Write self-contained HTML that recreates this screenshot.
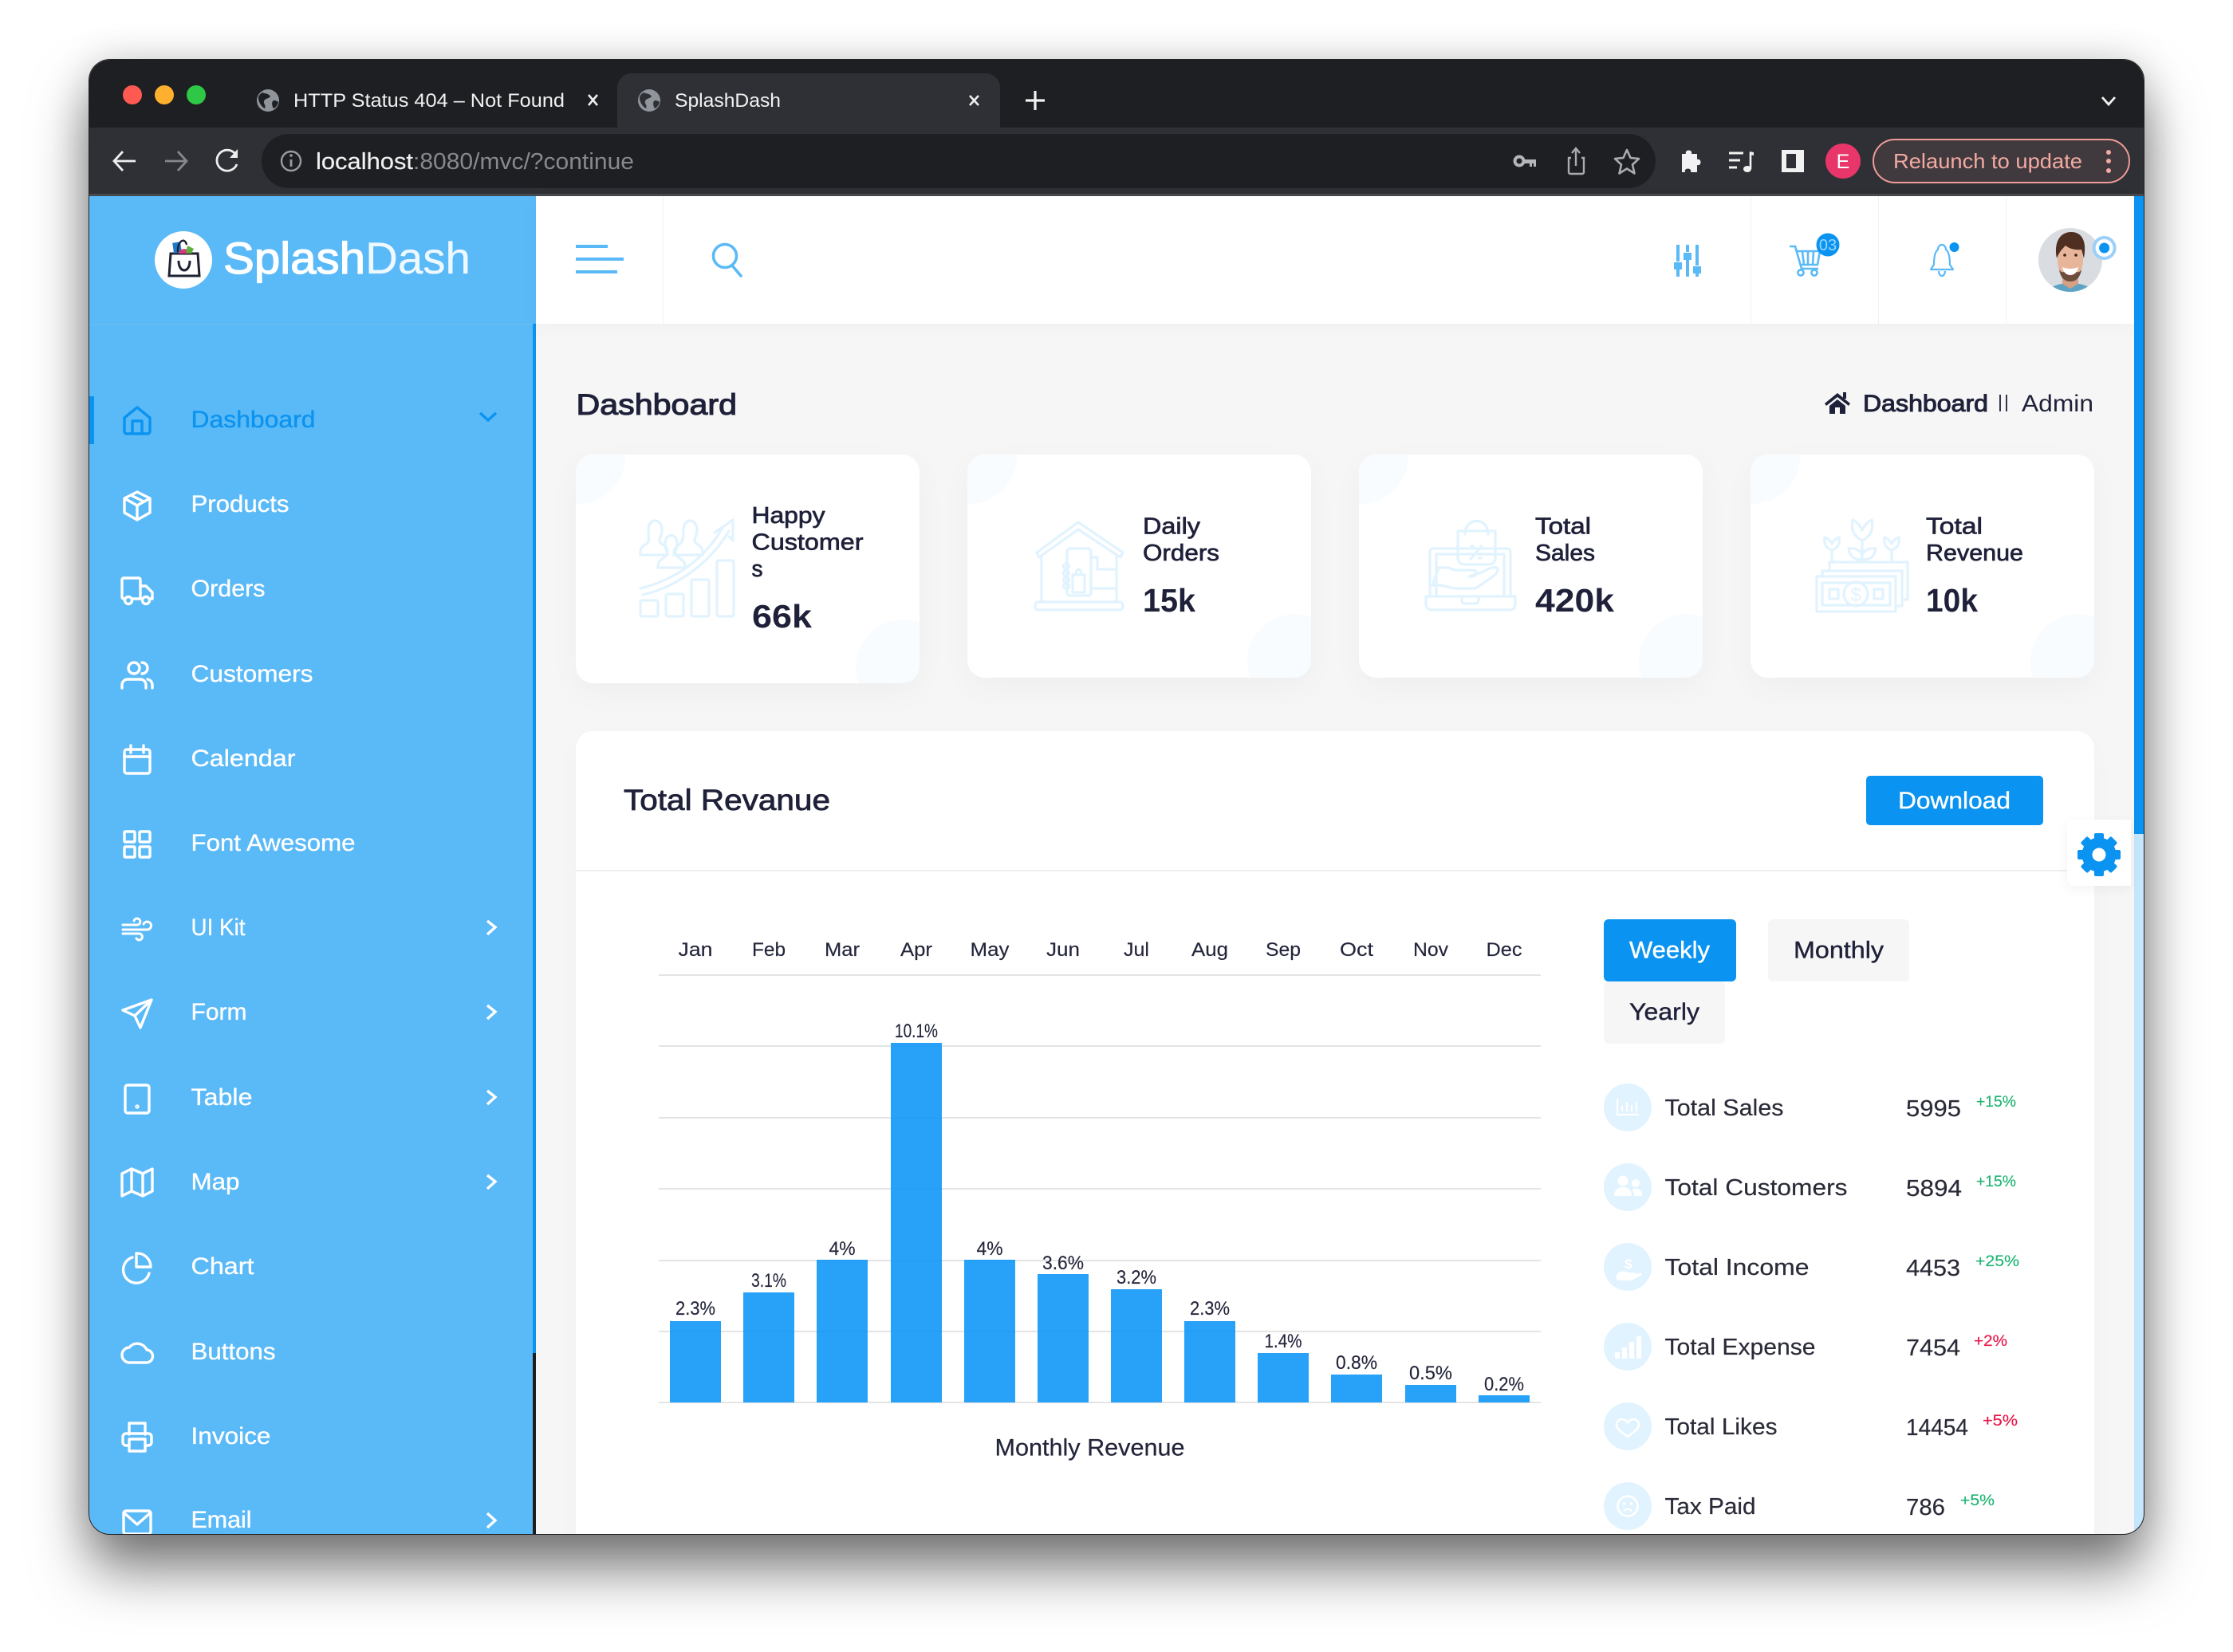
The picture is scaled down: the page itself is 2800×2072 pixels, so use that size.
<!DOCTYPE html>
<html><head><meta charset="utf-8"><title>SplashDash</title>
<style>
html,body{margin:0;padding:0;background:#fff;width:2800px;height:2072px;overflow:hidden}
body{position:relative;font-family:"Liberation Sans",sans-serif}
#shadow{position:absolute;left:112px;top:75px;width:2576px;height:1849px;border-radius:26px;box-shadow:0 44px 70px rgba(0,0,0,.52),0 0 50px rgba(0,0,0,.16)}
#win{position:absolute;left:112px;top:75px;width:2576px;height:1849px;border-radius:26px;overflow:hidden;background:#1e1f22;outline:1.5px solid #222;outline-offset:-.5px}
#in{position:absolute;left:-112px;top:-75px;width:2800px;height:2072px}
.a{position:absolute}
.card{position:absolute;background:#fff;border-radius:22px;box-shadow:0 12px 40px rgba(0,0,0,.035);overflow:hidden}
.card:before{content:"";position:absolute;left:-58px;top:-58px;width:120px;height:120px;border-radius:50%;background:#f8fcff}
.card:after{content:"";position:absolute;right:-40px;bottom:-40px;width:120px;height:120px;border-radius:50%;background:#f8fcff}
svg{position:absolute;left:0;top:0}
text{font-family:"Liberation Sans",sans-serif}
.n{font-size:29.5px;fill:#fff;stroke:#fff;stroke-width:.35}
.d{fill:#1e2139;stroke:#1e2139;stroke-width:.7}
.ct{font-size:29px}
.cv{font-size:41px;font-weight:bold;fill:#1e2139}
.mo{font-size:24px;fill:#23253b;stroke:#23253b;stroke-width:.15}
.ro{font-size:29px;fill:#2a2b38;stroke:#2a2b38;stroke-width:.2}
.pg{font-size:19.5px;fill:#22b573;stroke:#22b573;stroke-width:.2}
.pr{font-size:19.5px;fill:#e8174a;stroke:#e8174a;stroke-width:.2}
.ic{fill:none;stroke:#fff;stroke-width:3.4;stroke-linejoin:round;stroke-linecap:round}
.ci{fill:none;stroke:#e1f3fe;stroke-width:3.2;stroke-linejoin:round;stroke-linecap:round}
</style></head>
<body>
<div id="shadow"></div>
<div id="win"><div id="in">
  <!-- chrome -->
  <div class="a" style="left:112px;top:160px;width:2576px;height:84px;background:#2e3035"></div>
  <div class="a" style="left:112px;top:243px;width:2576px;height:3px;background:#48494d"></div>
  <div class="a" style="left:774px;top:92px;width:480px;height:68px;background:#2e3035;border-radius:18px 18px 0 0"></div>
  <div class="a" style="left:328px;top:168px;width:1748px;height:68px;background:#1e1f22;border-radius:34px"></div>
  <div class="a" style="left:2348px;top:174px;width:319px;height:52px;background:#403a3e;border:2.5px solid #ef9c96;border-radius:28px"></div>
  <!-- sidebar -->
  <div class="a" style="left:112px;top:246px;width:560px;height:1678px;background:#5ab9f7"></div>
  <div class="a" style="left:112px;top:406px;width:560px;height:2px;background:#63bcf6"></div>
  <div class="a" style="left:668px;top:406px;width:4px;height:1291px;background:#0a93f0"></div>
  <div class="a" style="left:668px;top:1697px;width:4px;height:227px;background:#1e1e1e"></div>
  <div class="a" style="left:112px;top:497px;width:6px;height:60px;background:#0a93f0"></div>
  <!-- main -->
  <div class="a" style="left:672px;top:246px;width:2004px;height:1678px;background:#f6f6f6"></div>
  <div class="a" style="left:672px;top:246px;width:2004px;height:160px;background:#fff;box-shadow:0 4px 24px rgba(0,0,0,.03)"></div>
  <div class="a" style="left:831px;top:246px;width:1px;height:160px;background:#f1f1f1"></div>
  <div class="a" style="left:2195px;top:246px;width:1px;height:160px;background:#e8f4fc"></div>
  <div class="a" style="left:2355px;top:246px;width:1px;height:160px;background:#e8f4fc"></div>
  <div class="a" style="left:2515px;top:246px;width:1px;height:160px;background:#e8f4fc"></div>
  <div class="a" style="left:2676px;top:246px;width:12px;height:800px;background:#0a93f0"></div>
  <div class="a" style="left:2676px;top:1046px;width:12px;height:878px;background:#c5e6fd"></div>
  <!-- cards -->
  <div class="card" style="left:722px;top:570px;width:431px;height:287px"></div>
  <div class="card" style="left:1213px;top:570px;width:431px;height:280px"></div>
  <div class="card" style="left:1704px;top:570px;width:431px;height:280px"></div>
  <div class="card" style="left:2195px;top:570px;width:431px;height:280px"></div>
  <!-- panel -->
  <div class="a" style="left:722px;top:917px;width:1904px;height:1030px;background:#fff;border-radius:22px;box-shadow:0 10px 40px rgba(0,0,0,.02)"></div>
  <div class="a" style="left:722px;top:1091px;width:1904px;height:2px;background:#eeeeee"></div>
  <div class="a" style="left:2340px;top:973px;width:222px;height:62px;background:#0a93f0;border-radius:5px"></div>
  <div class="a" style="left:2011px;top:1153px;width:166px;height:78px;background:#0a93f0;border-radius:6px"></div>
  <div class="a" style="left:2217px;top:1153px;width:177px;height:78px;background:#f6f6f6;border-radius:6px"></div>
  <div class="a" style="left:2011px;top:1231px;width:152px;height:78px;background:#f6f6f6;border-radius:6px"></div>
  <div class="a" style="left:2592px;top:1028px;width:80px;height:83px;background:#fff;border-radius:8px 0 0 8px;box-shadow:0 4px 16px rgba(0,0,0,.05)"></div>

  <svg width="2800" height="2072" viewBox="0 0 2800 2072">
    <!-- traffic lights -->
    <circle cx="166" cy="119" r="12" fill="#ff5a52"/><circle cx="206" cy="119" r="12" fill="#ffb02e"/><circle cx="246" cy="119" r="12" fill="#2ec846"/>
    <!-- tabs -->
    <g id="globe1"><circle cx="336" cy="126" r="14" fill="#8f959b"/><path d="M329 116c4 2 8 1 10 5-2 3-7 2-8 6-1 3 3 5 1 9-4-2-8-8-8-13 0-3 2-5 5-7zM343 126c3 0 5 1 6 2-1 4-3 7-6 8-2-3-3-8 0-10z" fill="#1e1f22"/></g>
    <text x="368" y="134" font-size="24.5" fill="#f1f1f1" textLength="340" lengthAdjust="spacingAndGlyphs">HTTP Status 404 – Not Found</text>
    <path d="M738 119l11 13M749 119l-11 13" stroke="#eee" stroke-width="2.6" fill="none"/>
    <circle cx="814" cy="126" r="14" fill="#8f959b"/><path d="M807 116c4 2 8 1 10 5-2 3-7 2-8 6-1 3 3 5 1 9-4-2-8-8-8-13 0-3 2-5 5-7zM821 126c3 0 5 1 6 2-1 4-3 7-6 8-2-3-3-8 0-10z" fill="#2e3035"/>
    <text x="846" y="134" font-size="24.5" fill="#f1f1f1" textLength="133" lengthAdjust="spacingAndGlyphs">SplashDash</text>
    <path d="M1216 120l11 12M1227 120l-11 12" stroke="#eee" stroke-width="2.6" fill="none"/>
    <path d="M1298 114v24M1286 126h24" stroke="#f1f1f1" stroke-width="3.2" fill="none"/>
    <path d="M2636 122l8 9 8-9" stroke="#f1f1f1" stroke-width="2.8" fill="none"/>
    <!-- nav -->
    <path d="M170 202h-26M154 190l-11 12 11 12" stroke="#eee" stroke-width="2.8" fill="none"/>
    <path d="M207 202h26M223 190l11 12-11 12" stroke="#85878b" stroke-width="2.8" fill="none"/>
    <path d="M295 193a13 13 0 1 0 2 13" stroke="#eee" stroke-width="2.8" fill="none"/><path d="M298 187v11h-10z" fill="#eee"/>
    <circle cx="365" cy="202" r="12" fill="none" stroke="#9a9b9e" stroke-width="2.4"/><path d="M365 200v9" stroke="#9a9b9e" stroke-width="2.8"/><circle cx="365" cy="195" r="1.8" fill="#9a9b9e"/>
    <text x="396" y="212" font-size="29" fill="#f1f1f1" stroke="#f1f1f1" stroke-width=".2" textLength="122" lengthAdjust="spacingAndGlyphs">localhost</text>
    <text x="518" y="212" font-size="29" fill="#87898d" textLength="277" lengthAdjust="spacingAndGlyphs">:8080/mvc/?continue</text>
    <!-- toolbar right -->
    <circle cx="1905" cy="202" r="5.5" fill="none" stroke="#b4b6b9" stroke-width="4"/><path d="M1910 200h16v9h-3v-4h-2v4h-3v-4h-8z" fill="#b4b6b9"/>
    <path d="M1970 198h-3v18a2 2 0 0 0 2 2h15a2 2 0 0 0 2-2v-18h-3M1976 208v-21M1971 192l5-6 5 6" fill="none" stroke="#a9abae" stroke-width="2.4"/>
    <path d="M2040 188l4.5 10 10.500 1-8 7.500 2.500 11-9.500-6-9.500 6 2.500-11-8-7.500 10.500-1z" fill="none" stroke="#a9abae" stroke-width="2.6" stroke-linejoin="round"/>
    <path d="M2109 193h5c-2-6 9-6 7 0h7v7c6-2 6 9 0 7v9h-8c2-6-9-6-7 0h-4z" fill="#f1f1f3"/>
    <path d="M2168 192h18M2168 201h14M2168 210h10" stroke="#f1f1f1" stroke-width="3" fill="none"/><path d="M2195 191v21" stroke="#f1f1f1" stroke-width="2.6"/><ellipse cx="2191" cy="212" rx="5" ry="4" fill="#f1f1f1"/><path d="M2194 190l5 1v4l-5-1z" fill="#f1f1f1"/>
    <rect x="2234" y="188" width="28" height="28" fill="#f1f1f1"/><rect x="2240" y="193" width="12" height="18" fill="#2e3035"/>
    <circle cx="2311" cy="202" r="22" fill="#e8366b"/><text x="2311" y="211" font-size="25" fill="#fff" text-anchor="middle">E</text>
    <text x="2374" y="211" font-size="26" fill="#f4a9a2" textLength="237" lengthAdjust="spacingAndGlyphs">Relaunch to update</text>
    <circle cx="2644" cy="191" r="3" fill="#f4a9a2"/><circle cx="2644" cy="202" r="3" fill="#f4a9a2"/><circle cx="2644" cy="214" r="3" fill="#f4a9a2"/>

    <!-- logo -->
    <circle cx="230" cy="326" r="36" fill="#fff"/>
    <path d="M214 318h34l2 28h-38z" fill="#fff" stroke="#1e2230" stroke-width="3"/>
    <rect x="217" y="304" width="10" height="13" fill="#1f77c9" transform="rotate(-8 222 310)"/><path d="M224 317c2-6 10-6 15-2v3h-15z" fill="#d23b77"/><path d="M235 308l8 4-3 6-7-1z" fill="#5db13d"/>
    <path d="M223 316c-1-14 9-19 11-9" fill="none" stroke="#1e2230" stroke-width="2.4"/>
    <path d="M224 327c0 16 14 16 14 0" fill="none" stroke="#1e2230" stroke-width="3"/>
    <text x="280" y="343" font-size="56" fill="#fff" stroke="#fff" stroke-width="1.3" textLength="178" lengthAdjust="spacingAndGlyphs">Splash</text>
    <text x="458" y="343" font-size="56" fill="#eef8ff" stroke="#eef8ff" stroke-width=".3" textLength="132" lengthAdjust="spacingAndGlyphs">Dash</text>

    <!-- topbar icons -->
    <path d="M722 309h40M722 325h60M722 341h52" stroke="#5ab9f7" stroke-width="4" fill="none"/>
    <circle cx="909" cy="321" r="14.5" fill="none" stroke="#5ab9f7" stroke-width="3.6"/><path d="M918 333l11 13" stroke="#5ab9f7" stroke-width="3.6" stroke-linecap="round"/>
    <g fill="#5ab9f7">
      <rect x="2102" y="307" width="4" height="21"/><rect x="2099" y="329" width="10" height="9"/><rect x="2102" y="338" width="4" height="9"/>
      <rect x="2114" y="307" width="4" height="9"/><rect x="2111" y="317" width="10" height="9"/><rect x="2114" y="326" width="4" height="21"/>
      <rect x="2126" y="307" width="4" height="26"/><rect x="2123" y="334" width="10" height="9"/><rect x="2126" y="343" width="4" height="4"/>
    </g>
    <g fill="none" stroke="#5ab9f7" stroke-width="2.6"><path d="M2244 309h7l8 28h21M2253 315h29l-3 17h-22M2260 316l2 16M2267 316v16M2274 316l-1 16"/><circle cx="2258" cy="342" r="3.600"/><circle cx="2275" cy="342" r="3.600"/></g>
    <circle cx="2292" cy="307" r="14.500" fill="#0a93f0"/><text x="2292" y="314" font-size="20" fill="#9ad6ff" text-anchor="middle">03</text>
    <path d="M2435 307c-3 0-5 3-5 6-4 3-5 11-5 19l-4 6h28l-4-6c0-8-1-16-5-19 0-3-2-6-5-6zM2431 340a4 6 0 0 0 8 0" fill="none" stroke="#5ab9f7" stroke-width="2.2" stroke-linejoin="round"/>
    <circle cx="2450.500" cy="310" r="6" fill="#0a93f0"/>
    <!-- avatar -->
    <defs><clipPath id="av"><circle cx="2596" cy="326" r="40"/></clipPath></defs>
    <g clip-path="url(#av)">
      <rect x="2556" y="286" width="80" height="80" fill="#d9dde1"/>
      <path d="M2565 370c2-10 16-15 31-15s29 5 31 15z" fill="#5fa3c4"/>
      <path d="M2586 346h20v10l-10 6-10-6z" fill="#d6a084"/>
      <ellipse cx="2596" cy="326" rx="16" ry="25" fill="#e6b59a"/>
      <path d="M2579 324c-4-20 4-33 18-33 14 0 20 12 16 33l-3-11c-8 1-15-1-20-5-4 4-8 8-11 16z" fill="#4f2f22"/>
      <path d="M2582 338c2 12 8 15 14 15s12-3 14-15c-2 3-4 4-6 3-4-1-12-1-16 0-2 1-4 0-6-3z" fill="#6b4d3e"/>
      <path d="M2586 335q10 4 20 0q-2 10-10 10t-10-10z" fill="#fff"/><path d="M2590 343q6 4 12 0q-6 5-12 0" fill="#e8396a"/>
      <circle cx="2589" cy="320" r="1.800" fill="#3a241a"/><circle cx="2603" cy="320" r="1.800" fill="#3a241a"/>
    </g>
    <circle cx="2638.600" cy="311" r="13" fill="#fff" stroke="#9bd0f8" stroke-width="4"/><circle cx="2638.600" cy="311" r="6.500" fill="#0a93f0"/>

    <!-- sidebar text -->
    <text x="239.500" y="536" font-size="29.5" fill="#0a93f0" stroke="#0a93f0" stroke-width=".35" textLength="156" lengthAdjust="spacingAndGlyphs">Dashboard</text>
    <text class="n" x="239.500" y="642" textLength="123" lengthAdjust="spacingAndGlyphs">Products</text>
    <text class="n" x="239.500" y="748" textLength="93" lengthAdjust="spacingAndGlyphs">Orders</text>
    <text class="n" x="239.500" y="855" textLength="153" lengthAdjust="spacingAndGlyphs">Customers</text>
    <text class="n" x="239.500" y="961" textLength="131" lengthAdjust="spacingAndGlyphs">Calendar</text>
    <text class="n" x="239.500" y="1067" textLength="206" lengthAdjust="spacingAndGlyphs">Font Awesome</text>
    <text class="n" x="239.500" y="1173" textLength="68" lengthAdjust="spacingAndGlyphs">UI Kit</text>
    <text class="n" x="239.500" y="1279" textLength="70" lengthAdjust="spacingAndGlyphs">Form</text>
    <text class="n" x="239.500" y="1386" textLength="77" lengthAdjust="spacingAndGlyphs">Table</text>
    <text class="n" x="239.500" y="1492" textLength="61" lengthAdjust="spacingAndGlyphs">Map</text>
    <text class="n" x="239.500" y="1598" textLength="79" lengthAdjust="spacingAndGlyphs">Chart</text>
    <text class="n" x="239.500" y="1705" textLength="106" lengthAdjust="spacingAndGlyphs">Buttons</text>
    <text class="n" x="239.500" y="1811" textLength="100" lengthAdjust="spacingAndGlyphs">Invoice</text>
    <text class="n" x="239.500" y="1916" textLength="76" lengthAdjust="spacingAndGlyphs">Email</text>
    <!-- sidebar icons -->
    <g class="ic" transform="translate(172 528)" style="stroke:#0a93f0"><path d="M-16-4L0-17 16-4V13a3 3 0 0 1-3 3H-13a3 3 0 0 1-3-3ZM-6 16V0H6V16"/></g>
    <g class="ic" transform="translate(172 634)"><path d="M0-17L16-9V9L0 18-16 9V-9ZM-16-9L0 0 16-9M0 0V18M-8-13L8-5"/></g>
    <g class="ic" transform="translate(172 741)"><rect x="-19" y="-16" width="23" height="26" rx="2"/><path d="M4-6H11L19 2V10H4"/><circle cx="-11" cy="12" r="4.500" fill="#5ab9f7"/><circle cx="11" cy="12" r="4.500" fill="#5ab9f7"/></g>
    <g class="ic" transform="translate(172 847)"><circle cx="-4" cy="-9" r="7"/><path d="M-19 16V12A7 7 0 0 1-12 5H4A7 7 0 0 1 11 12V16M6-16A7 7 0 0 1 6-2M13 5A7 7 0 0 1 19 12V16"/></g>
    <g class="ic" transform="translate(172 953)"><rect x="-16" y="-13" width="32" height="30" rx="3"/><path d="M-16-4H16M-8-18V-9M8-18V-9"/></g>
    <g class="ic" transform="translate(172 1059)"><rect x="-16" y="-16" width="13" height="13" rx="1"/><rect x="3" y="-16" width="13" height="13" rx="1"/><rect x="-16" y="3" width="13" height="13" rx="1"/><rect x="3" y="3" width="13" height="13" rx="1"/></g>
    <g class="ic" style="stroke-width:3" transform="translate(172 1165)"><path d="M-18-5H0A4 4 0 1 0-4-10M-18 1H12A5 5 0 1 0 8-6M-18 6H3A4 4 0 1 1-1 12"/></g>
    <g class="ic" transform="translate(172 1271)"><path d="M18-17L-18-4-3 3 4 18ZM-3 3L18-17"/></g>
    <g class="ic" transform="translate(172 1378)"><rect x="-15" y="-17" width="30" height="35" rx="3"/><circle cx="0" cy="10" r="1"/></g>
    <g class="ic" transform="translate(172 1483)"><path d="M-19-11L-7-17 7-11 19-17V11L7 17-7 11-19 17ZM-7-17V11M7-11V17"/></g>
    <g class="ic" transform="translate(172 1590)"><path d="M-6-13A16.500 16.500 0 1 0 15 7M-1-18A17 17 0 0 1 17-1H-1Z"/></g>
    <g class="ic" transform="translate(172 1694)"><path d="M-9 15H11A8 8 0 0 0 12-1 13 13 0 0 0-10-4 9.500 9.500 0 0 0-9 15Z"/></g>
    <g class="ic" transform="translate(172 1803)"><path d="M-10-4V-18H10V-4M-10 10H-14A4 4 0 0 1-18 6V-1A4 4 0 0 1-14-5H14A4 4 0 0 1 18-1V6A4 4 0 0 1 14 10H10"/><rect x="-10" y="2" width="20" height="15"/></g>
    <g class="ic" transform="translate(172 1909)"><rect x="-17" y="-14" width="34" height="29" rx="3"/><path d="M-17-12L0 3 17-12"/></g>
    <path d="M602 518l10 9 10-9" fill="none" stroke="#0a93f0" stroke-width="3.400"/>
    <g fill="none" stroke="#fff" stroke-width="3.400"><path d="M611 1155l10 8-10 9M611 1261l10 8-10 9M611 1368l10 8-10 9M611 1474l10 8-10 9M611 1898l10 9-10 9"/></g>

    <!-- heading -->
    <text class="d" x="722.500" y="520" font-size="37" textLength="201.500" lengthAdjust="spacingAndGlyphs" style="stroke-width:1.1">Dashboard</text>
    <g fill="#1e2139" transform="translate(2304 506)"><path d="M-16 0L0-13 16 0 14 3 0-8-14 3Z"/><path d="M-10 3L0-5 10 3V13H3V5H-3V13H-10Z"/><rect x="7" y="-14" width="4" height="8"/></g>
    <text class="d" x="2336" y="516" font-size="30" textLength="157" lengthAdjust="spacingAndGlyphs" style="stroke-width:1">Dashboard</text>
    <path d="M2508 495v21M2516 495v21" stroke="#1e2139" stroke-width="1.800"/>
    <text x="2535" y="516" font-size="30" fill="#1e2139" textLength="90" lengthAdjust="spacingAndGlyphs">Admin</text>

    <!-- card text -->
    <g>
      <text class="d ct" x="942.500" y="656" textLength="92" lengthAdjust="spacingAndGlyphs">Happy</text>
      <text class="d ct" x="942.500" y="689.500" textLength="140" lengthAdjust="spacingAndGlyphs">Customer</text>
      <text class="d ct" x="942.500" y="723" textLength="14" lengthAdjust="spacingAndGlyphs">s</text>
      <text class="cv" x="943" y="787" textLength="75" lengthAdjust="spacingAndGlyphs">66k</text>
      <text class="d ct" x="1433" y="669.500" textLength="72" lengthAdjust="spacingAndGlyphs">Daily</text>
      <text class="d ct" x="1433" y="703" textLength="96" lengthAdjust="spacingAndGlyphs">Orders</text>
      <text class="cv" x="1433" y="767" textLength="66" lengthAdjust="spacingAndGlyphs">15k</text>
      <text class="d ct" x="1925" y="669.500" textLength="70" lengthAdjust="spacingAndGlyphs">Total</text>
      <text class="d ct" x="1925" y="703" textLength="75" lengthAdjust="spacingAndGlyphs">Sales</text>
      <text class="cv" x="1925" y="767" textLength="99" lengthAdjust="spacingAndGlyphs">420k</text>
      <text class="d ct" x="2415" y="669.500" textLength="71" lengthAdjust="spacingAndGlyphs">Total</text>
      <text class="d ct" x="2415" y="703" textLength="122" lengthAdjust="spacingAndGlyphs">Revenue</text>
      <text class="cv" x="2415" y="767" textLength="65" lengthAdjust="spacingAndGlyphs">10k</text>
    </g>
    <!-- card icons -->
    <g class="ci">
      <rect x="803" y="753" width="22" height="20" rx="2"/><rect x="835" y="745" width="22" height="28" rx="2"/><rect x="867" y="727" width="22" height="46" rx="2"/><rect x="899" y="703" width="21" height="70" rx="2"/>
      <path d="M803 738c40-10 80-34 104-78M806 746c44-10 86-42 108-80M896 668l23-16v26l-5-5"/>
      <path d="M813 665c0-16 17-16 17 0 0 8-4 10-3 14 2 5 9 4 10 12v5H803v-5c1-8 8-7 10-12 1-4 0-6 0-14zM857 665c0-16 17-16 17 0 0 8-4 10-3 14 2 5 9 4 10 12v5H845v-5c2-6 8-8 10-12 2-4 2-6 2-14zM834 682c0-14 15-14 15 0 0 8-3 9-2 13 2 5 11 6 12 14v3H825v-3c1-8 10-9 11-14 1-4-2-5-2-13z"/>
      <path d="M1300 693L1352 655 1408 693 1405 699 1352 664 1303 699ZM1306 697V755M1400 697V755"/><rect x="1298" y="755" width="110" height="10" rx="4"/>
      <rect x="1338" y="688" width="30" height="59" rx="4"/><path d="M1368 699h8v15h24M1368 738h32"/><path d="M1345 721h15v22h-15zM1349 721c0-9 7-9 7 0"/><circle cx="1337" cy="710" r="3.500"/><circle cx="1337" cy="719" r="3.500"/><circle cx="1337" cy="727" r="3.500"/><circle cx="1337" cy="735" r="3.500"/>
      <path d="M1793 748V692a4 4 0 0 1 4-4H1890a4 4 0 0 1 4 4V748M1801 748V695H1886V748"/><path d="M1788 748H1900V758a7 7 0 0 1-7 7H1795a7 7 0 0 1-7-7ZM1833 748v5a4 4 0 0 0 4 4H1850a4 4 0 0 0 4-4V748"/>
      <path d="M1828 666H1875V700a8 8 0 0 1-8 8H1836a8 8 0 0 1-8-8ZM1837 670c0-22 29-22 29 0M1858 685l-14 16M1845 685h2M1855 700h2"/>
      <path d="M1804 712h14c4 4 12 3 18 3h10c8 0 6 8 0 8h-4l18-6c6-4 18-9 18-2 0 4-6 8-10 11l-18 12h-24c-8 0-14-4-22-4h-8z"/>
      <path d="M2335 705V680M2335 678c-12-6-14-16-12-26 4 2 9 6 12 13 3-7 8-11 12-13 2 10 0 20-12 26zM2335 702c-12 0-16-6-17-14 8-1 14 2 17 8 3-6 9-9 17-8-1 8-5 14-17 14zM2297 705V692M2297 690c-8-3-10-8-9-16 4 1 7 4 9 8 2-4 5-7 9-8 1 8-1 13-9 16zM2372 705V692M2372 690c-8-3-10-8-9-16 4 1 7 4 9 8 2-4 5-7 9-8 1 8-1 13-9 16z"/>
      <path d="M2294 716V705H2392V752H2385"/><path d="M2285 723V716H2385V760H2377"/><rect x="2278" y="723" width="99" height="44"/><rect x="2285" y="731" width="85" height="28"/><circle cx="2327" cy="745" r="15"/><rect x="2294" y="739" width="11" height="12"/><rect x="2350" y="739" width="11" height="12"/>
    </g>
    <text x="2327" y="754" font-size="24" fill="#e1f3fe" text-anchor="middle">$</text>

    <!-- revenue header -->
    <text x="782" y="1016" font-size="37" fill="#1e2139" stroke="#1e2139" stroke-width=".8" textLength="259" lengthAdjust="spacingAndGlyphs">Total Revanue</text>
    <text x="2380" y="1014" font-size="30" fill="#fff" stroke="#fff" stroke-width=".4" textLength="141" lengthAdjust="spacingAndGlyphs">Download</text>

    <!-- chart -->
    <g stroke="#e4e4e4" stroke-width="2"><path d="M826 1223H1932M826 1312H1932M826 1402H1932M826 1491H1932M826 1581H1932M826 1670H1932M826 1759H1932"/></g>
    <g fill="#0a95f8" fill-opacity=".88">
      <rect x="840" y="1657" width="64" height="102"/><rect x="932" y="1621" width="64" height="138"/><rect x="1024" y="1580" width="64" height="179"/><rect x="1117" y="1308" width="64" height="451"/><rect x="1209" y="1580" width="64" height="179"/><rect x="1301" y="1598" width="64" height="161"/><rect x="1393" y="1617" width="64" height="142"/><rect x="1485" y="1657" width="64" height="102"/><rect x="1577" y="1697" width="64" height="62"/><rect x="1669" y="1724" width="64" height="35"/><rect x="1762" y="1737" width="64" height="22"/><rect x="1854" y="1750" width="64" height="9"/>
    </g>
    <g class="mo" text-anchor="middle">
      <text x="872" y="1199" class="mo" text-anchor="middle" textLength="43" lengthAdjust="spacingAndGlyphs">Jan</text>
      <text x="964" y="1199" class="mo" text-anchor="middle" textLength="42" lengthAdjust="spacingAndGlyphs">Feb</text>
      <text x="1056" y="1199" class="mo" text-anchor="middle" textLength="44" lengthAdjust="spacingAndGlyphs">Mar</text>
      <text x="1149" y="1199" class="mo" text-anchor="middle" textLength="40" lengthAdjust="spacingAndGlyphs">Apr</text>
      <text x="1241" y="1199" class="mo" text-anchor="middle" textLength="49" lengthAdjust="spacingAndGlyphs">May</text>
      <text x="1333" y="1199" class="mo" text-anchor="middle" textLength="42" lengthAdjust="spacingAndGlyphs">Jun</text>
      <text x="1425" y="1199" class="mo" text-anchor="middle" textLength="32" lengthAdjust="spacingAndGlyphs">Jul</text>
      <text x="1517" y="1199" class="mo" text-anchor="middle" textLength="46" lengthAdjust="spacingAndGlyphs">Aug</text>
      <text x="1609" y="1199" class="mo" text-anchor="middle" textLength="44" lengthAdjust="spacingAndGlyphs">Sep</text>
      <text x="1701" y="1199" class="mo" text-anchor="middle" textLength="42" lengthAdjust="spacingAndGlyphs">Oct</text>
      <text x="1794" y="1199" class="mo" text-anchor="middle" textLength="44" lengthAdjust="spacingAndGlyphs">Nov</text>
      <text x="1886" y="1199" class="mo" text-anchor="middle" textLength="45" lengthAdjust="spacingAndGlyphs">Dec</text>
      <text x="872" y="1649" class="mo" text-anchor="middle" textLength="50" lengthAdjust="spacingAndGlyphs">2.3%</text>
      <text x="964" y="1614" class="mo" text-anchor="middle" textLength="44" lengthAdjust="spacingAndGlyphs">3.1%</text>
      <text x="1056" y="1574" class="mo" text-anchor="middle" textLength="33" lengthAdjust="spacingAndGlyphs">4%</text>
      <text x="1149" y="1301" class="mo" text-anchor="middle" textLength="54" lengthAdjust="spacingAndGlyphs">10.1%</text>
      <text x="1241" y="1574" class="mo" text-anchor="middle" textLength="33" lengthAdjust="spacingAndGlyphs">4%</text>
      <text x="1333" y="1592" class="mo" text-anchor="middle" textLength="52" lengthAdjust="spacingAndGlyphs">3.6%</text>
      <text x="1425" y="1610" class="mo" text-anchor="middle" textLength="50" lengthAdjust="spacingAndGlyphs">3.2%</text>
      <text x="1517" y="1649" class="mo" text-anchor="middle" textLength="50" lengthAdjust="spacingAndGlyphs">2.3%</text>
      <text x="1609" y="1690" class="mo" text-anchor="middle" textLength="47" lengthAdjust="spacingAndGlyphs">1.4%</text>
      <text x="1701" y="1717" class="mo" text-anchor="middle" textLength="52" lengthAdjust="spacingAndGlyphs">0.8%</text>
      <text x="1794" y="1730" class="mo" text-anchor="middle" textLength="54" lengthAdjust="spacingAndGlyphs">0.5%</text>
      <text x="1886" y="1744" class="mo" text-anchor="middle" textLength="50" lengthAdjust="spacingAndGlyphs">0.2%</text>
    </g>
    <text x="1247.500" y="1825.500" font-size="30" fill="#23253b" stroke="#23253b" stroke-width=".25" textLength="238" lengthAdjust="spacingAndGlyphs">Monthly Revenue</text>

    <!-- buttons -->
    <text x="2043" y="1201.500" font-size="30" fill="#fff" stroke="#fff" stroke-width=".4" textLength="101" lengthAdjust="spacingAndGlyphs">Weekly</text>
    <text x="2249" y="1201.500" font-size="30" fill="#1e2139" stroke="#1e2139" stroke-width=".4" textLength="113" lengthAdjust="spacingAndGlyphs">Monthly</text>
    <text x="2043" y="1279" font-size="30" fill="#1e2139" stroke="#1e2139" stroke-width=".4" textLength="88" lengthAdjust="spacingAndGlyphs">Yearly</text>

    <!-- list -->
    <g fill="#e1f3fe"><circle cx="2041" cy="1389" r="30"/><circle cx="2041" cy="1489" r="30"/><circle cx="2041" cy="1589" r="30"/><circle cx="2041" cy="1689" r="30"/><circle cx="2041" cy="1789" r="30"/><circle cx="2041" cy="1889" r="30"/></g>
    <g transform="translate(0 -2)">
    <path d="M2028 1380v20h27M2034 1396v-7M2040 1396v-11M2046 1396v-8M2052 1396v-12" stroke="#fff" stroke-width="2.200" fill="none"/>
    <g fill="#fff"><circle cx="2035" cy="1483" r="6.500"/><path d="M2024 1502c0-15 22-15 22 0z"/><circle cx="2051" cy="1486" r="5"/><path d="M2048 1493c10-2 11 5 11 9h-10c0-3-1-6-3-8z"/></g>
    <path d="M2027 1601c5-6 10-5 15-3h7c3 1 2 4-1 4h-6l13-3c4-1 5 1 2 3l-11 6h-13l-6-1z" fill="#fff"/><text x="2042" y="1593" font-size="17" font-weight="bold" fill="#fff" text-anchor="middle">$</text>
    <g fill="#fff"><rect x="2025" y="1698" width="6" height="8"/><rect x="2034" y="1692" width="6" height="14"/><rect x="2043" y="1685" width="6" height="21"/><rect x="2052" y="1678" width="6" height="28"/></g>
    <path d="M2041 1804c-8-6-14-10-14-15 0-8 10-9 14-3 4-6 14-5 14 3 0 5-6 9-14 15z" fill="none" stroke="#fff" stroke-width="2.600"/>
    <circle cx="2041" cy="1891" r="12.500" fill="none" stroke="#fff" stroke-width="2.600"/><circle cx="2036.500" cy="1888" r="1.800" fill="#fff"/><circle cx="2045.500" cy="1888" r="1.800" fill="#fff"/><path d="M2036 1897c3-3 7-3 10 0" fill="none" stroke="#fff" stroke-width="2.200"/>
    </g>

    <text class="ro" x="2087.500" y="1399" textLength="149" lengthAdjust="spacingAndGlyphs">Total Sales</text>
    <text class="ro" x="2087.500" y="1499" textLength="229" lengthAdjust="spacingAndGlyphs">Total Customers</text>
    <text class="ro" x="2087.500" y="1599" textLength="181" lengthAdjust="spacingAndGlyphs">Total Income</text>
    <text class="ro" x="2087.500" y="1699" textLength="189" lengthAdjust="spacingAndGlyphs">Total Expense</text>
    <text class="ro" x="2087.500" y="1799" textLength="141" lengthAdjust="spacingAndGlyphs">Total Likes</text>
    <text class="ro" x="2087.500" y="1899" textLength="114" lengthAdjust="spacingAndGlyphs">Tax Paid</text>
    <text class="ro" x="2390" y="1400" textLength="69" lengthAdjust="spacingAndGlyphs">5995</text>
    <text class="ro" x="2390" y="1500" textLength="70" lengthAdjust="spacingAndGlyphs">5894</text>
    <text class="ro" x="2390" y="1600" textLength="68" lengthAdjust="spacingAndGlyphs">4453</text>
    <text class="ro" x="2390" y="1700" textLength="68" lengthAdjust="spacingAndGlyphs">7454</text>
    <text class="ro" x="2390" y="1800" textLength="78" lengthAdjust="spacingAndGlyphs">14454</text>
    <text class="ro" x="2390" y="1900" textLength="49" lengthAdjust="spacingAndGlyphs">786</text>
    <text class="pg" x="2478" y="1388" textLength="50" lengthAdjust="spacingAndGlyphs">+15%</text>
    <text class="pg" x="2478" y="1488" textLength="50" lengthAdjust="spacingAndGlyphs">+15%</text>
    <text class="pg" x="2477" y="1588" textLength="55" lengthAdjust="spacingAndGlyphs">+25%</text>
    <text class="pr" x="2475" y="1688" textLength="42" lengthAdjust="spacingAndGlyphs">+2%</text>
    <text class="pr" x="2486" y="1788" textLength="44" lengthAdjust="spacingAndGlyphs">+5%</text>
    <text class="pg" x="2458" y="1888" textLength="43" lengthAdjust="spacingAndGlyphs">+5%</text>

    <!-- gear -->
    <g transform="translate(2632 1072)" fill="#0a93f0">
      <circle r="15" fill="none" stroke="#0a93f0" stroke-width="13"/>
      <rect x="-6" y="-27" width="12" height="10" rx="2"/><rect x="-6" y="-27" width="12" height="10" rx="2" transform="rotate(45)"/><rect x="-6" y="-27" width="12" height="10" rx="2" transform="rotate(90)"/><rect x="-6" y="-27" width="12" height="10" rx="2" transform="rotate(135)"/><rect x="-6" y="-27" width="12" height="10" rx="2" transform="rotate(180)"/><rect x="-6" y="-27" width="12" height="10" rx="2" transform="rotate(225)"/><rect x="-6" y="-27" width="12" height="10" rx="2" transform="rotate(270)"/><rect x="-6" y="-27" width="12" height="10" rx="2" transform="rotate(315)"/>
    </g>
  </svg>
</div></div>
</body></html>
